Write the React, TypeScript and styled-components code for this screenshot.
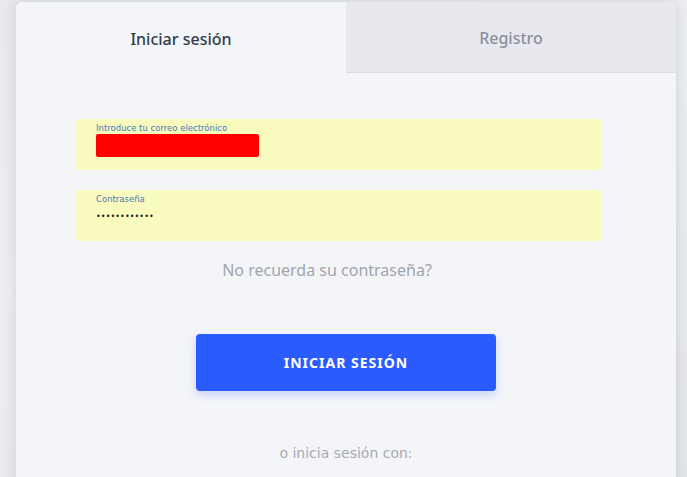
import * as React from "react";
import styled, { createGlobalStyle } from "styled-components";

const GlobalStyle = createGlobalStyle`
  html, body {
    margin: 0;
    height: 100%;
    overflow: hidden;
  }
  body {
    background: linear-gradient(160deg, #e9eaee 0%, #eeeff3 40%, #e6e7ec 100%);
    font-family: "Noto Sans", "Open Sans", sans-serif;
  }
`;

const Page = styled.div`
  padding: 2px 11px 0 16px;
`;

const Card = styled.div`
  width: 660px;
  height: 520px;
  background: #f4f5f9;
  border-radius: 6px 6px 0 0;
  box-shadow: 0 0 14px rgba(120, 124, 150, 0.28);
  overflow: hidden;
`;

const Tabs = styled.div`
  display: grid;
  grid-template-columns: 330px 330px;
  height: 71px;
`;

const Tab = styled.div<{ $active?: boolean }>`
  display: flex;
  align-items: center;
  justify-content: center;
  font-size: 16px;
  font-weight: 500;
  padding-top: 2px;
  color: ${(p) => (p.$active ? "#343b4c" : "#8b909c")};
  background: ${(p) => (p.$active ? "#f4f5f9" : "#e8e9ee")};
  border-bottom: ${(p) => (p.$active ? "none" : "1px solid #dcdde3")};
`;

const Form = styled.form`
  display: flex;
  flex-direction: column;
  padding: 46px 74px 0 60px;
`;

const Field = styled.div`
  display: flex;
  flex-direction: column;
  height: 51px;
  box-sizing: border-box;
  padding: 3px 20px 0;
  background: #f8fbbd;
  border-radius: 3px;
  margin-bottom: 20px;
`;

const Label = styled.label`
  font-family: "DejaVu Sans", Verdana, sans-serif;
  font-size: 8.5px;
  color: #4c78b8;
  line-height: 12px;
`;

const Redacted = styled.div`
  width: 163px;
  height: 23px;
  background: #ff0000;
  border-radius: 2px;
`;

const Dots = styled.div`
  font-family: "DejaVu Sans", sans-serif;
  font-size: 8px;
  letter-spacing: 0.1px;
  color: #222;
  line-height: 20px;
  margin-top: 2px;
`;

const Forgot = styled.div`
  text-align: center;
  padding-right: 24px;
  margin-top: -2px;
  font-size: 16px;
  color: #a2a5ad;
`;

const Submit = styled.button`
  align-self: center;
  margin: 53px 0 0 14px;
  width: 300px;
  height: 57px;
  border: 0;
  border-radius: 4px;
  background: #2a5bff;
  color: #ffffff;
  font-family: "Noto Sans", sans-serif;
  font-size: 14px;
  font-weight: 700;
  letter-spacing: 1px;
  box-shadow: 0 4px 10px rgba(42, 91, 255, 0.22);
`;

const Alt = styled.div`
  text-align: center;
  margin: 54px 0 0 14px;
  font-family: "DejaVu Sans", Verdana, sans-serif;
  font-size: 14px;
  color: #a8aab2;
`;

export default function App() {
  return (
    <>
      <GlobalStyle />
      <Page>
        <Card>
          <Tabs>
            <Tab $active>Iniciar sesión</Tab>
            <Tab>Registro</Tab>
          </Tabs>
          <Form onSubmit={(e) => e.preventDefault()}>
            <Field>
              <Label>Introduce tu correo electrónico</Label>
              <Redacted />
            </Field>
            <Field>
              <Label>Contraseña</Label>
              <Dots>••••••••••••</Dots>
            </Field>
            <Forgot>No recuerda su contraseña?</Forgot>
            <Submit type="submit">INICIAR SESIÓN</Submit>
            <Alt>o inicia sesión con:</Alt>
          </Form>
        </Card>
      </Page>
    </>
  );
}
